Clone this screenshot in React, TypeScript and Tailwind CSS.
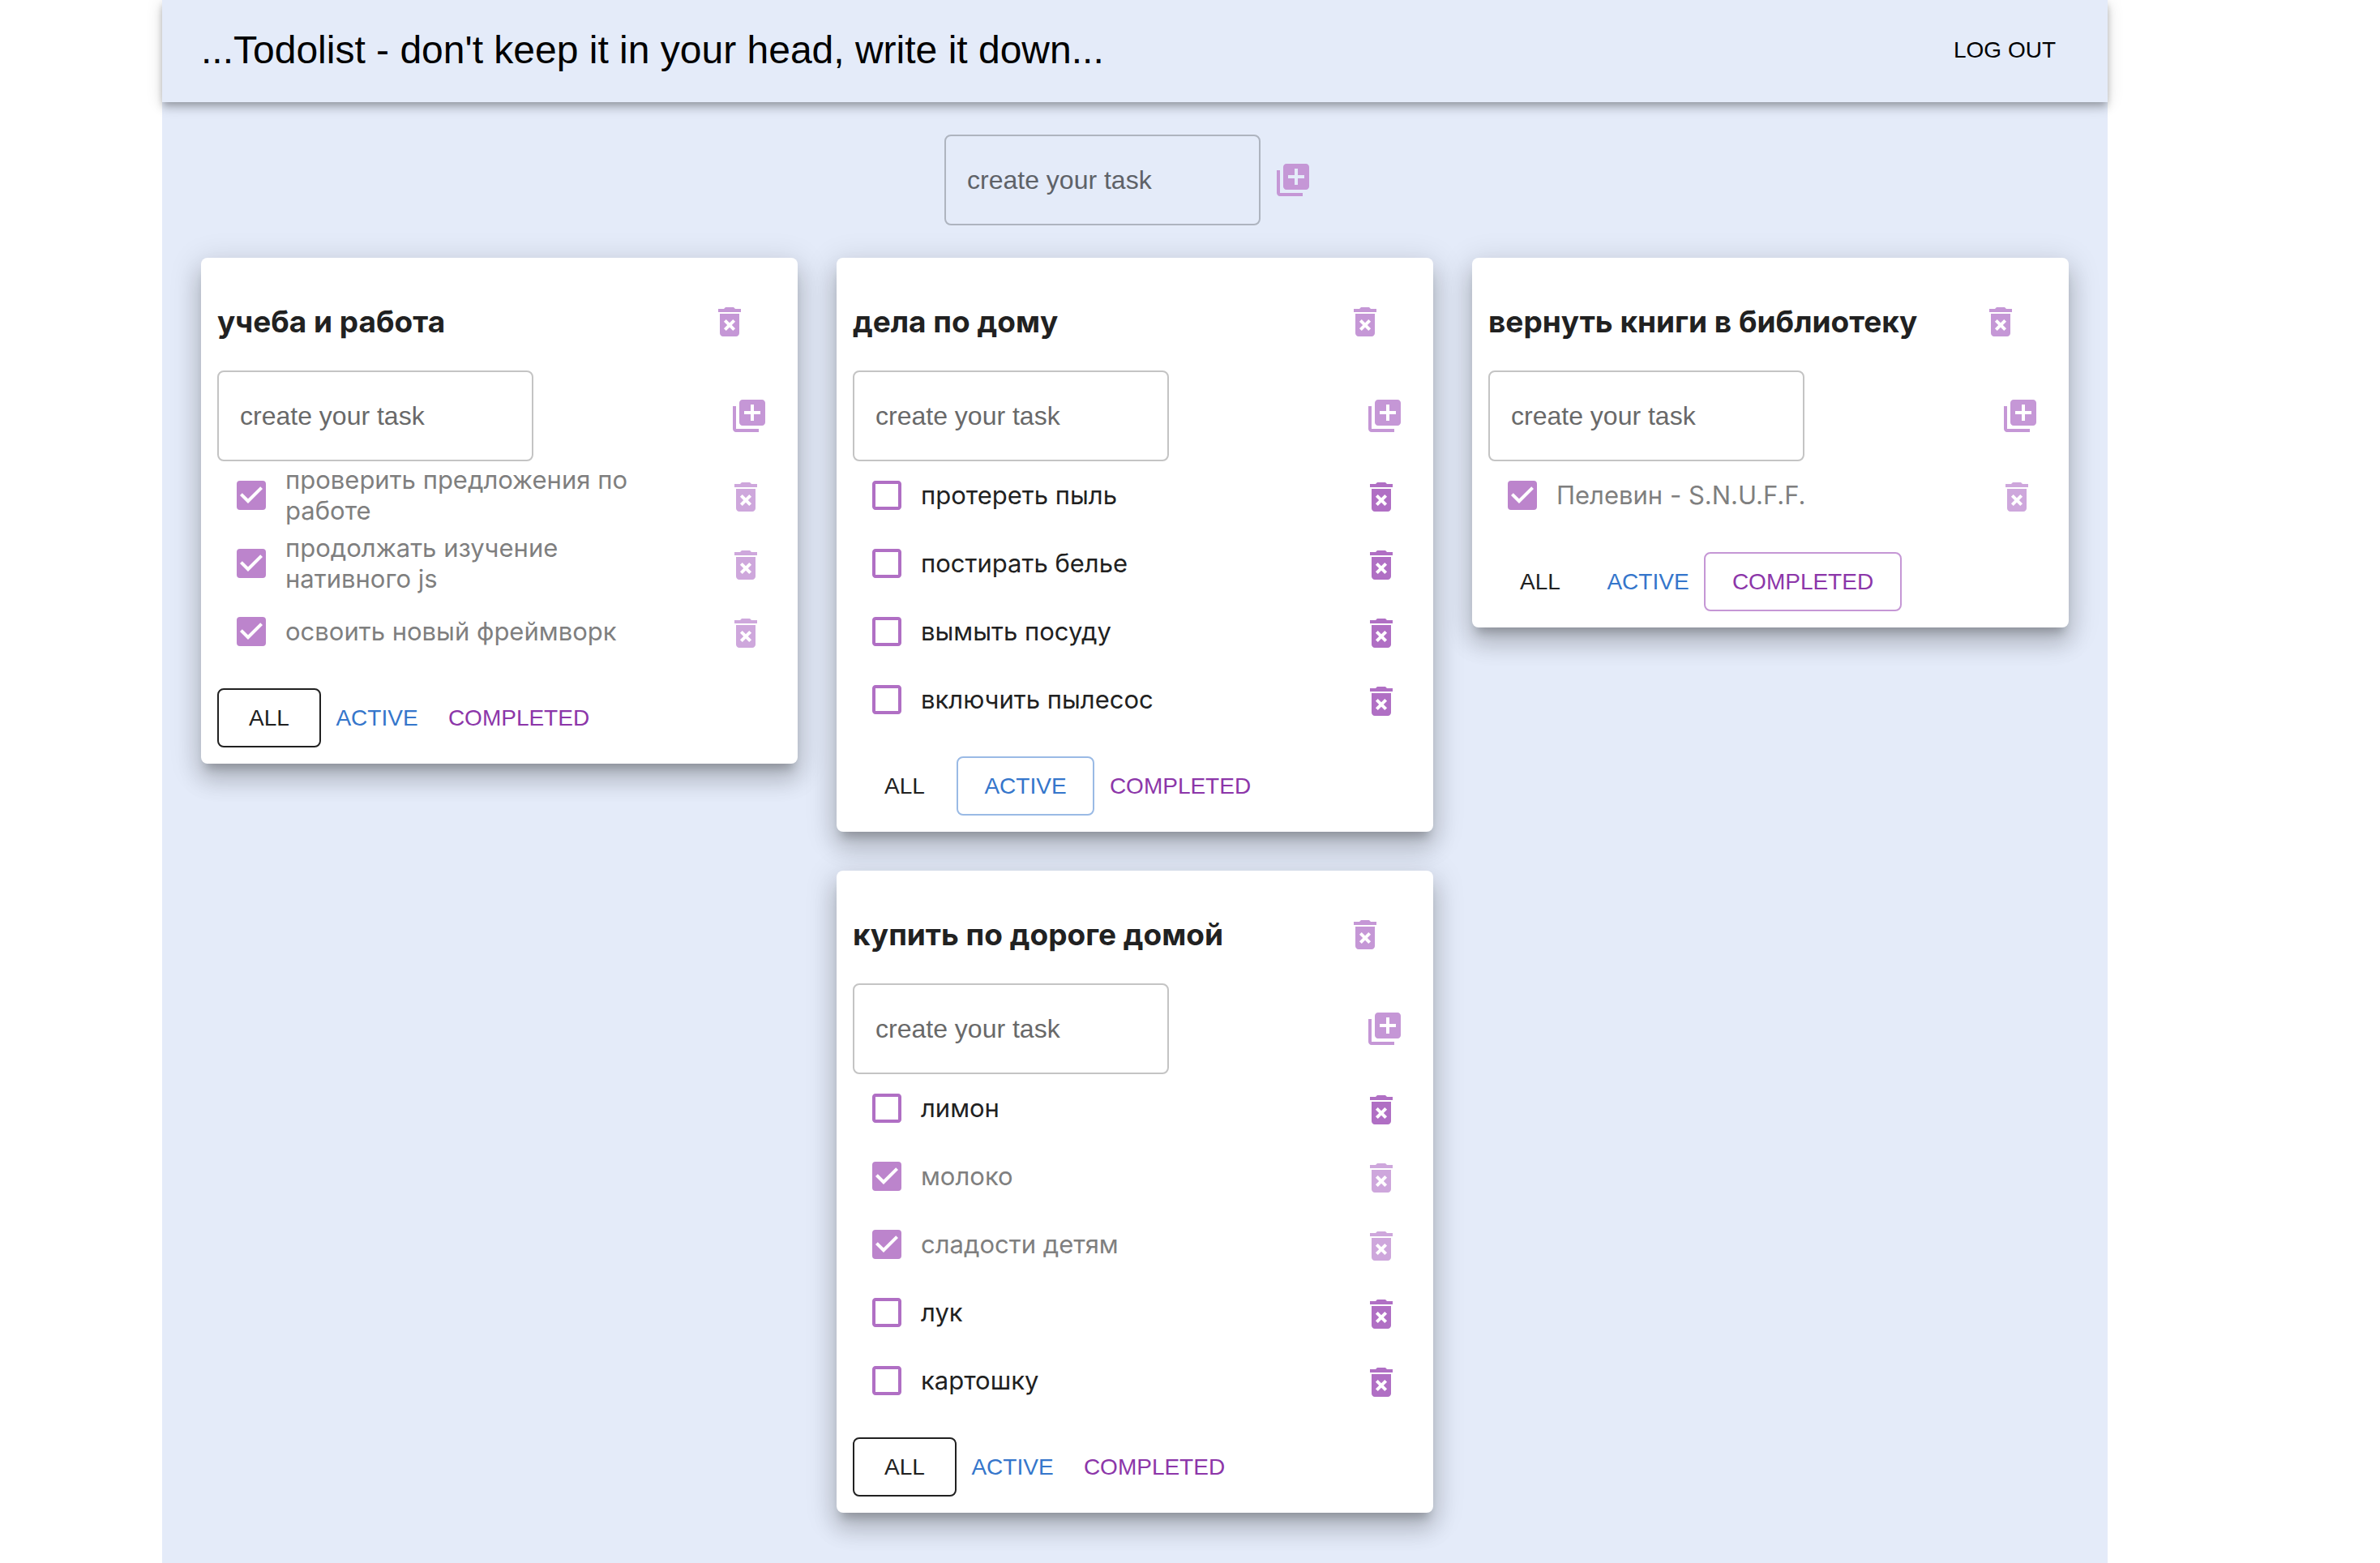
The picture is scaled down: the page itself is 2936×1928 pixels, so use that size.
import { useState } from "react";
import type { FormEvent } from "react";
import clsx from "clsx";
import {
  MdAddToPhotos,
  MdCheckBox,
  MdCheckBoxOutlineBlank,
  MdDeleteForever,
} from "react-icons/md";

type Filter = "all" | "active" | "completed";
type Task = { id: string; title: string; done: boolean };
type TodoList = { id: string; title: string; filter: Filter; tasks: Task[] };

const makeTasks = (prefix: string, items: [string, boolean][]): Task[] =>
  items.map(([title, done], i) => ({ id: `${prefix}-${i}`, title, done }));

const initialColumns: TodoList[][] = [
  [
    {
      id: "study",
      title: "учеба и работа",
      filter: "all",
      tasks: makeTasks("study", [
        ["проверить предложения по работе", true],
        ["продолжать изучение нативного js", true],
        ["освоить новый фреймворк", true],
      ]),
    },
  ],
  [
    {
      id: "home",
      title: "дела по дому",
      filter: "active",
      tasks: makeTasks("home", [
        ["протереть пыль", false],
        ["постирать белье", false],
        ["вымыть посуду", false],
        ["включить пылесос", false],
      ]),
    },
    {
      id: "shop",
      title: "купить по дороге домой",
      filter: "all",
      tasks: makeTasks("shop", [
        ["лимон", false],
        ["молоко", true],
        ["сладости детям", true],
        ["лук", false],
        ["картошку", false],
      ]),
    },
  ],
  [
    {
      id: "books",
      title: "вернуть книги в библиотеку",
      filter: "completed",
      tasks: makeTasks("books", [["Пелевин - S.N.U.F.F.", true]]),
    },
  ],
];

const filterButtons: {
  value: Filter;
  label: string;
  color: string;
  border: string;
  plain: string;
  outlined: string;
}[] = [
  {
    value: "all",
    label: "ALL",
    color: "text-[#212121]",
    border: "border-[#212121]",
    plain: "min-w-32",
    outlined: "min-w-32",
  },
  {
    value: "active",
    label: "ACTIVE",
    color: "text-[#3576cb]",
    border: "border-[#9abae5]",
    plain: "min-w-[138px]",
    outlined: "min-w-[170px]",
  },
  {
    value: "completed",
    label: "COMPLETED",
    color: "text-[#8c36a9]",
    border: "border-[#c597d5]",
    plain: "min-w-[212px]",
    outlined: "min-w-[244px]",
  },
];

function AddForm({
  label,
  border,
  text,
  onAdd,
}: {
  label: string;
  border: string;
  text: string;
  onAdd: (title: string) => void;
}) {
  const [value, setValue] = useState("");
  const submit = (e: FormEvent) => {
    e.preventDefault();
    if (value.trim()) onAdd(value.trim());
    setValue("");
  };
  return (
    <form onSubmit={submit} className="flex items-center justify-between">
      <input
        type="text"
        aria-label={label}
        placeholder="create your task"
        value={value}
        onChange={(e) => setValue(e.target.value)}
        className={clsx(
          "h-28 w-[390px] rounded-lg border-2 bg-transparent px-[26px] text-[32px] text-[#212121] outline-none",
          border,
          text,
        )}
      />
      <button
        type="submit"
        aria-label="Add"
        className="flex size-20 items-center justify-center text-[#c597d6]"
      >
        <MdAddToPhotos className="size-12" />
      </button>
    </form>
  );
}

function TaskRow({
  task,
  onToggle,
  onDelete,
}: {
  task: Task;
  onToggle: () => void;
  onDelete: () => void;
}) {
  return (
    <li className="flex h-21 items-center justify-between pr-1">
      <label
        className={clsx(
          "flex items-center font-['Inter',sans-serif] text-[31px] leading-[38px]",
          task.done ? "text-[#7f7f7f]" : "text-[#212121]",
        )}
      >
        <input
          type="checkbox"
          checked={task.done}
          onChange={onToggle}
          className="peer sr-only"
        />
        <span className="flex size-21 shrink-0 items-center justify-center">
          {task.done ? (
            <MdCheckBox className="size-12 text-[#bc84cc]" />
          ) : (
            <MdCheckBoxOutlineBlank className="size-12 text-[#b06fc4]" />
          )}
        </span>
        <span className="max-w-[450px]">{task.title}</span>
      </label>
      <button
        type="button"
        aria-label={`Delete ${task.title}`}
        onClick={onDelete}
        className={clsx(
          "flex size-20 items-center justify-center pt-1",
          task.done ? "text-[#cea7dc]" : "text-[#b06fc4]",
        )}
      >
        <MdDeleteForever className="size-12" />
      </button>
    </li>
  );
}

function TodoCard({
  list,
  onChange,
  onDelete,
}: {
  list: TodoList;
  onChange: (list: TodoList) => void;
  onDelete: () => void;
}) {
  const visible = list.tasks.filter((t) =>
    list.filter === "all" ? true : list.filter === "completed" ? t.done : !t.done,
  );
  return (
    <section className="rounded-lg bg-white p-5 shadow-[0_12px_12px_-6px_rgba(0,0,0,0.2),0_20px_28px_2px_rgba(0,0,0,0.14),0_8px_36px_6px_rgba(0,0,0,0.12)]">
      <div className="mt-[19px] mb-5 flex items-center justify-between pr-6">
        <h2 className="font-['Inter',sans-serif] text-[37px] leading-[44px] font-bold text-[#212121]">
          {list.title}
        </h2>
        <button
          type="button"
          aria-label={`Delete ${list.title}`}
          onClick={onDelete}
          className="flex size-20 items-center justify-center text-[#c597d6]"
        >
          <MdDeleteForever className="size-12" />
        </button>
      </div>
      <AddForm
        label={`New task for ${list.title}`}
        border="border-[#c4c4c4]"
        text="placeholder:text-[#696969]"
        onAdd={(title) =>
          onChange({
            ...list,
            tasks: [{ id: `${list.id}-${Date.now()}`, title, done: false }, ...list.tasks],
          })
        }
      />
      <ul>
        {visible.map((task) => (
          <TaskRow
            key={task.id}
            task={task}
            onToggle={() =>
              onChange({
                ...list,
                tasks: list.tasks.map((t) => (t.id === task.id ? { ...t, done: !t.done } : t)),
              })
            }
            onDelete={() =>
              onChange({ ...list, tasks: list.tasks.filter((t) => t.id !== task.id) })
            }
          />
        ))}
      </ul>
      <div className="mt-7 flex">
        {filterButtons.map((b) => {
          const selected = b.value === list.filter;
          return (
            <button
              key={b.value}
              type="button"
              aria-pressed={selected}
              onClick={() => onChange({ ...list, filter: b.value })}
              className={clsx(
                "h-[73px] rounded-lg border-2 text-[28px]",
                b.color,
                selected ? b.border : "border-transparent",
                selected ? b.outlined : b.plain,
              )}
            >
              {b.label}
            </button>
          );
        })}
      </div>
    </section>
  );
}

export default function App() {
  const [columns, setColumns] = useState(initialColumns);

  const updateList = (id: string, next: TodoList | null) =>
    setColumns((cols) =>
      cols.map((col) =>
        col.flatMap((l) => (l.id !== id ? [l] : next ? [next] : [])),
      ),
    );

  const addList = (title: string) =>
    setColumns((cols) => [
      [{ id: `list-${Date.now()}`, title, filter: "all", tasks: [] }, ...cols[0]],
      ...cols.slice(1),
    ]);

  return (
    <div className="min-h-screen bg-white pr-[336px] pl-[200px] font-['Liberation_Sans',Arial,sans-serif]">
      <div className="min-h-screen bg-[#e4ebf9] pb-12">
        <header className="flex items-center justify-between bg-[#e4ebf9] px-12 pt-6 pb-[26px] text-black shadow-[0_4px_8px_-2px_rgba(0,0,0,0.2),0_8px_10px_0_rgba(0,0,0,0.14),0_2px_20px_0_rgba(0,0,0,0.12)]">
          <h1 className="text-[48px] leading-[76px]">
            ...Todolist - don't keep it in your head, write it down...
          </h1>
          <button type="button" className="px-4 text-[28px]">
            LOG OUT
          </button>
        </header>
        <main>
          <div className="flex justify-center py-10">
            <AddForm
              label="New list"
              border="border-[#aeb4bf]"
              text="placeholder:text-[#5e6268]"
              onAdd={addList}
            />
          </div>
          <div className="grid grid-cols-3 items-start gap-12 px-12">
            {columns.map((col, i) => (
              <div key={i} className="flex flex-col gap-12">
                {col.map((list) => (
                  <TodoCard
                    key={list.id}
                    list={list}
                    onChange={(next) => updateList(list.id, next)}
                    onDelete={() => updateList(list.id, null)}
                  />
                ))}
              </div>
            ))}
          </div>
        </main>
      </div>
    </div>
  );
}
